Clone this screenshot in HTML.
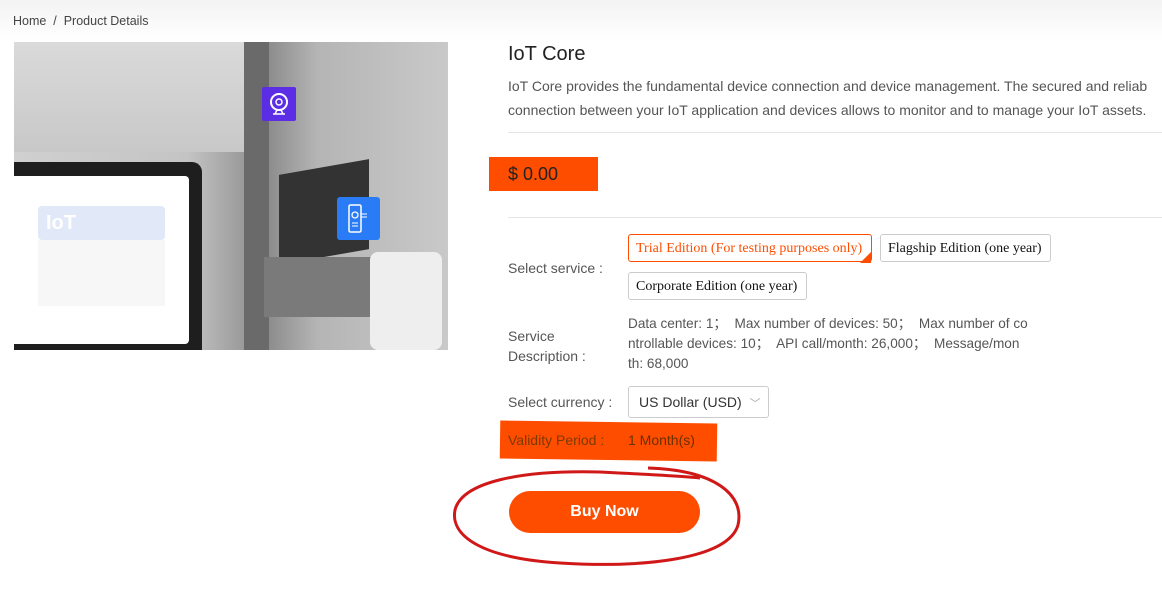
<!DOCTYPE html>
<html><head><meta charset="utf-8"><style>
body{margin:0;width:1162px;height:593px;overflow:hidden;background:#fff;font-family:"Liberation Sans",sans-serif;position:relative;color:#333}
.a{position:absolute}
.bc{left:0;top:0;width:1162px;height:42px;background:linear-gradient(#f3f3f3,#fff)}
.lbl{font-size:14px;color:#555}
.opt{position:absolute;height:28px;border:1px solid #ccc;border-radius:3px;font-family:"Liberation Serif",serif;font-size:14px;line-height:28px;padding:0 7px;color:#111;box-sizing:border-box}
</style></head><body>
<div class="a bc"></div>
<div class="a" style="left:13px;top:14px;font-size:12.5px;color:#444">Home&nbsp; /&nbsp; Product Details</div>
<div class="a" style="left:14px;top:42px;width:434px;height:308px;background:linear-gradient(90deg,#d0d0d0 0%,#c4c4c4 40%,#8a8a8a 58%,#b5b5b5 70%,#c9c9c9 100%);overflow:hidden">
 <div class="a" style="left:0;top:0;width:240px;height:110px;background:linear-gradient(#dadada,#c8c8c8)"></div>
 <div class="a" style="left:230px;top:0;width:25px;height:308px;background:#6a6a6a"></div>
 <div class="a" style="left:265px;top:125px;width:90px;height:90px;background:#333;transform:skewY(-10deg)"></div>
 <div class="a" style="left:250px;top:215px;width:110px;height:60px;background:#7a7a7a"></div>
 <div class="a" style="left:356px;top:210px;width:72px;height:98px;background:#eee;border-radius:8px"></div>
 <div class="a" style="left:0;top:120px;width:188px;height:188px;background:#1e1e1e;border-radius:0 10px 0 0"></div>
 <div class="a" style="left:0;top:134px;width:175px;height:168px;background:#fff;border-radius:0 4px 4px 0"></div>
 <div class="a" style="left:24px;top:164px;width:127px;height:34px;background:#e1e9f9;border-radius:4px;color:#fff;font-weight:bold;font-size:20px;line-height:34px;padding-left:8px;box-sizing:border-box">IoT</div>
 <div class="a" style="left:24px;top:198px;width:127px;height:66px;background:#f7f7f7"></div>
 <div class="a" style="left:248px;top:45px;width:34px;height:34px;background:#5b2ee6;border-radius:2px"><svg width="34" height="34"><circle cx="17" cy="15" r="8" fill="none" stroke="#fff" stroke-width="2"/><circle cx="17" cy="15" r="3" fill="none" stroke="#fff" stroke-width="1.5"/><path d="M11 27h12M13 27l2-4M21 27l-2-4" stroke="#fff" stroke-width="1.5" fill="none"/></svg></div>
 <div class="a" style="left:323px;top:155px;width:43px;height:43px;background:#2a7cf6;border-radius:3px"><svg width="43" height="43"><rect x="12" y="8" width="12" height="27" rx="1.5" fill="none" stroke="#fff" stroke-width="1.5"/><circle cx="18" cy="18" r="3" fill="none" stroke="#fff" stroke-width="1.3"/><path d="M24 17h6M24 20h6M15 26h6M15 29h6" stroke="#fff" stroke-width="1"/></svg></div>
</div>
<div class="a" style="left:508px;top:43px;font-size:20px;color:#222">IoT Core</div>
<div class="a" style="left:508px;top:74px;font-size:14px;line-height:24px;color:#555;white-space:nowrap">IoT Core provides the fundamental device connection and device management. The secured and reliab<br>connection between your IoT application and devices allows to monitor and to manage your IoT assets.</div>
<div class="a" style="left:508px;top:132px;width:654px;height:1px;background:#e5e5e5"></div>
<div class="a" style="left:489px;top:157px;width:109px;height:34px;background:#ff4d00"></div>
<div class="a" style="left:508px;top:164px;font-size:18px;color:#222">$ 0.00</div>
<div class="a" style="left:508px;top:217px;width:654px;height:1px;background:#e5e5e5"></div>
<div class="a lbl" style="left:508px;top:260px">Select service :</div>
<div class="opt" style="left:628px;top:234px;width:244px;border-color:#ff4d00;color:#ff4d00">Trial Edition (For testing purposes only)</div>
<div class="a" style="left:860px;top:252px;width:0;height:0;border-left:11px solid transparent;border-bottom:11px solid #ff4d00"></div>
<div class="opt" style="left:880px;top:234px;width:171px">Flagship Edition (one year)</div>
<div class="opt" style="left:628px;top:272px;width:179px">Corporate Edition (one year)</div>
<div class="a lbl" style="left:508px;top:326px;line-height:20px">Service<br>Description :</div>
<div class="a lbl" style="left:628px;top:314px;line-height:20px;white-space:nowrap;font-size:13.6px">Data center: 1；&nbsp; Max number of devices: 50；&nbsp; Max number of co<br>ntrollable devices: 10；&nbsp; API call/month: 26,000；&nbsp; Message/mon<br>th: 68,000</div>
<div class="a lbl" style="left:508px;top:394px">Select currency :</div>
<div class="a" style="left:628px;top:386px;width:141px;height:32px;border:1px solid #ccc;border-radius:3px;box-sizing:border-box;font-size:14px;line-height:30px;padding-left:10px;color:#333">US Dollar (USD) <span style="color:#aaa;font-size:11px;margin-left:4px">﹀</span></div>
<div class="a" style="left:500px;top:422px;width:217px;height:38px;background:#ff4d00;transform:rotate(0.8deg)"></div>
<div class="a" style="left:508px;top:432px;font-size:14px;color:#7a3a00">Validity Period :</div>
<div class="a" style="left:628px;top:432px;font-size:14px;color:#6a3000">1 Month(s)</div>
<div class="a" style="left:509px;top:491px;width:191px;height:42px;background:#ff4d00;border-radius:21px;color:#fff;font-weight:bold;font-size:16px;line-height:42px;text-align:center">Buy Now</div>
<svg class="a" style="left:0;top:0" width="1162" height="593"><path d="M648 468 C715 470 745 495 738 525 C728 560 640 568 560 563 C480 558 450 535 455 510 C462 482 520 470 600 472 C640 474 680 476 700 478" fill="none" stroke="#d01818" stroke-width="3"/></svg>
</body></html>
